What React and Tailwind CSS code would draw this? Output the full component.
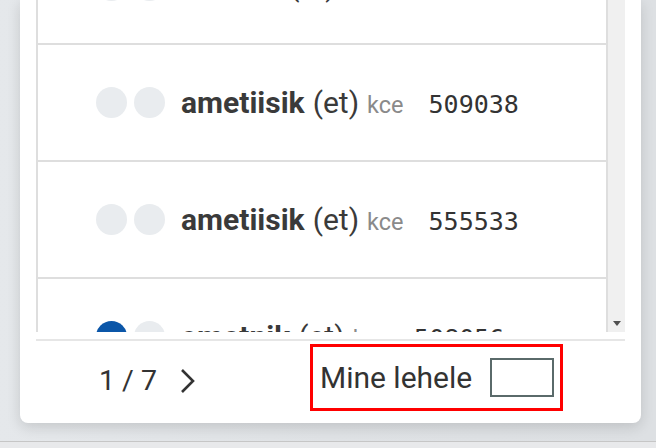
import React from "react";

const rows = [
  { name: "ametlik", num: "508012", first: false },
  { name: "ametiisik", num: "509038", first: false },
  { name: "ametiisik", num: "555533", first: false },
  { name: "ametnik", num: "508056", first: true },
];

function Row({ r }) {
  return (
    <div className="flex h-[117px] shrink-0 items-center border-b-2 border-[#dedede] pl-[58px]">
      <div className={`h-[31px] w-[31px] rounded-full ${r.first ? "bg-[#0b56a8]" : "bg-[#e9ecef]"}`} />
      <div className="ml-[7px] h-[31px] w-[31px] rounded-full bg-[#e9ecef]" />
      <div className="ml-[16px] flex items-baseline whitespace-nowrap font-['Roboto',sans-serif] text-[#3a3a3a]">
        <span className="text-[30px] font-bold">{r.name}</span>
        <span className="ml-[8px] text-[30px]">(et)</span>
        <span className="ml-[8px] text-[23.5px] text-[#8a8a8a]">kce</span>
        <span className="ml-[25px] font-['DejaVu_Sans_Mono',monospace] text-[25px] text-[#333]">{r.num}</span>
      </div>
    </div>
  );
}

export default function App() {
  return (
    <div className="flex h-[448px] w-[656px] flex-col overflow-hidden bg-[#e2e5e8] font-['Roboto',sans-serif]">
      <div className="flex h-[441px] shrink-0 bg-gradient-to-r from-[#e5e8eb] via-[#dfe2e5] to-[#dde0e3] pl-[20px] pr-[15px]">
        <div className="flex h-[423px] w-[621px] flex-col rounded-b-[8px] bg-white px-[16px] shadow-[0_4px_14px_rgba(0,0,0,0.14)]">
          <div className="flex h-[332px] shrink-0">
            <div className="h-full flex-1 overflow-hidden border-x-2 border-[#dedede]">
              <div className="mt-[-72px] flex flex-col">
                {rows.map((r, i) => (
                  <Row key={i} r={r} />
                ))}
              </div>
            </div>
            <div className="relative h-full w-[17px] bg-[#f0f0f0]">
              <svg className="absolute bottom-[6px] left-[5px]" width="8" height="5" viewBox="0 0 8 5">
                <polygon points="0,0 8,0 4,5" fill="#505050" />
              </svg>
            </div>
          </div>
          <div className="mt-[7px] h-[2px] shrink-0 bg-[#e6e6e6]" />
          <div className="flex flex-1 items-start text-[#333]">
            <div className="mt-[22px] flex items-center pl-[63px]">
              <span className="text-[28.5px] leading-[36px]">1 / 7</span>
              <svg className="ml-[22px]" width="18" height="26" viewBox="0 0 18 26">
                <polyline points="3,2 14,13 3,24" fill="none" stroke="#333" strokeWidth="2.6" />
              </svg>
            </div>
            <div className="ml-[113px] mt-[3px] flex h-[67px] w-[253px] items-center border-[3px] border-[#ff0000] pl-[7px]">
              <span className="text-[30px] leading-[36px]">Mine lehele</span>
              <div className="ml-[18px] h-[39px] w-[64px] border-2 border-[#5a6a6a] bg-white" />
            </div>
          </div>
        </div>
      </div>
      <div className="h-[7px] shrink-0 border-t border-[#c6c6c6] bg-[#e8e9eb]" />
    </div>
  );
}
